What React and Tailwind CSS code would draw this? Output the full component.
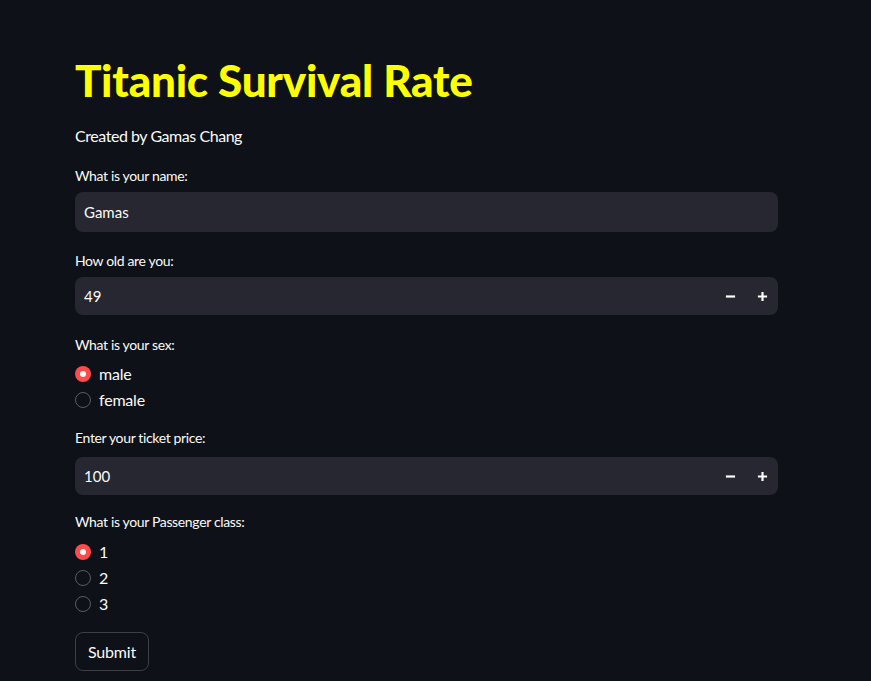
import React from "react";

const font = { fontFamily: "Lato, 'Noto Sans', sans-serif" };

const Label = ({ children, className = "" }) => (
  <div className={"text-[14px] leading-[20px] tracking-[-0.35px] text-[#fafafa] " + className}>{children}</div>
);

const NumberInput = ({ value, className = "" }) => (
  <div className={"flex h-[38px] items-center rounded-lg bg-[#262730] " + className}>
    <span className="flex-1 pl-[9px] text-[15px] text-[#fafafa]">{value}</span>
    <button className="flex h-full w-[32px] items-center justify-center text-white">
      <svg width="11" height="11" viewBox="0 0 12 12">
        <path d="M1 6h10" stroke="currentColor" strokeWidth="2.4" />
      </svg>
    </button>
    <button className="flex h-full w-[32px] items-center justify-center text-white">
      <svg width="11" height="11" viewBox="0 0 12 12">
        <path d="M1 6h10M6 1v10" stroke="currentColor" strokeWidth="2.4" />
      </svg>
    </button>
  </div>
);

const Radio = ({ label, checked }) => (
  <div className="flex h-[26px] items-center gap-2">
    {checked ? (
      <span className="flex h-4 w-4 items-center justify-center rounded-full bg-[#ff4b4b]">
        <span className="h-[6px] w-[6px] rounded-full bg-white" />
      </span>
    ) : (
      <span className="h-4 w-4 rounded-full border border-[#5a5c63]" />
    )}
    <span className="text-[16px] tracking-[-0.2px] text-[#fafafa]">{label}</span>
  </div>
);

export default function App() {
  return (
    <div className="min-h-screen bg-[#0e1117] pl-[75px]" style={font}>
      <div className="w-[703px] pb-[10px]">
        <h1 className="pt-[54px] text-[44px] font-black leading-[52px] tracking-[-0.25px] text-[#ffff00]">
          Titanic Survival Rate
        </h1>
        <p className="mt-[18px] text-[16px] leading-[24px] tracking-[-0.45px] text-[#fafafa]">Created by Gamas Chang</p>

        <Label className="mt-[18px]">What is your name:</Label>
        <div className="mt-[6px] flex h-[40px] items-center rounded-lg bg-[#262730] pl-[9px] text-[15px] text-[#fafafa]">
          Gamas
        </div>

        <Label className="mt-[19px]">How old are you:</Label>
        <NumberInput value="49" className="mt-[6px]" />

        <Label className="mt-[20px]">What is your sex:</Label>
        <div className="mt-[6px]">
          <Radio label="male" checked />
          <Radio label="female" />
        </div>

        <Label className="mt-[15px]">Enter your ticket price:</Label>
        <NumberInput value="100" className="mt-[9px]" />

        <Label className="mt-[17px]">What is your Passenger class:</Label>
        <div className="mt-[7px]">
          <Radio label="1" checked />
          <Radio label="2" />
          <Radio label="3" />
        </div>

        <button className="mt-[15px] h-[39px] rounded-lg border border-[#3d3f47] bg-[#0e1117] px-[12px] text-[16px] tracking-[-0.2px] text-[#fafafa]">
          Submit
        </button>
      </div>
    </div>
  );
}
